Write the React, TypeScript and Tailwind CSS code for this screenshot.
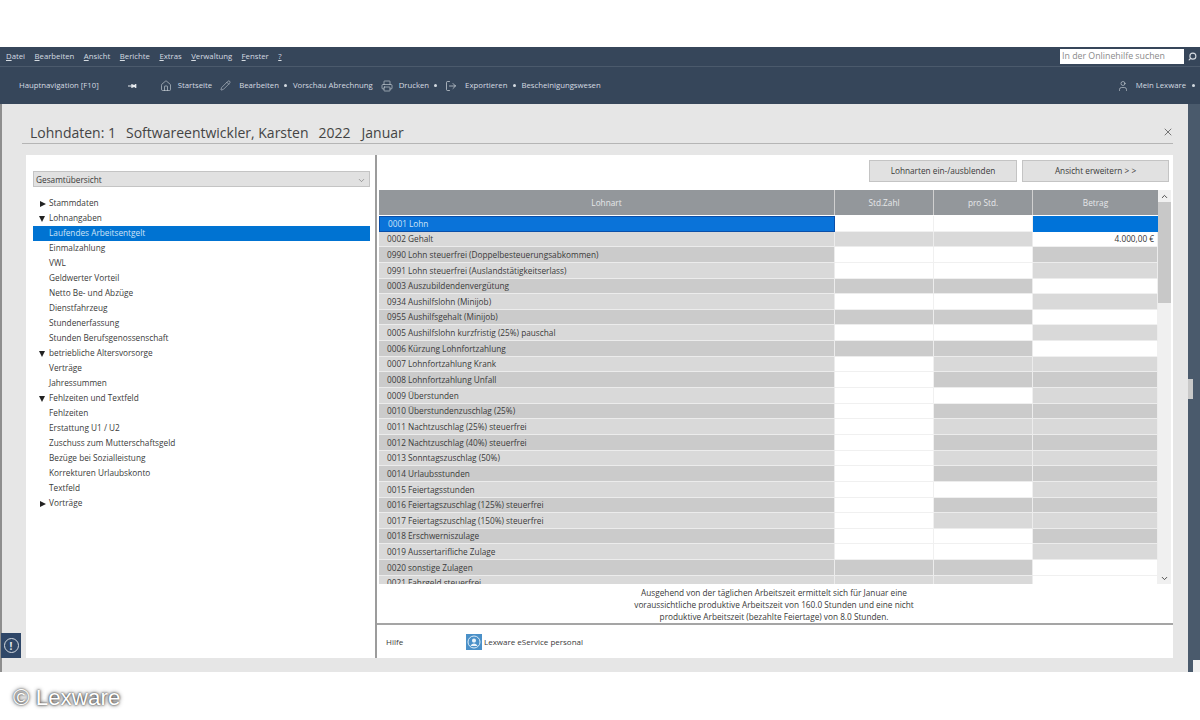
import { ChevronDown, ChevronUp, House, LogOut, Pencil, Printer, Search, User, X } from "lucide-react";

const menu = [
  ["D", "atei"],
  ["B", "earbeiten"],
  ["A", "nsicht"],
  ["B", "erichte"],
  ["E", "xtras"],
  ["V", "erwaltung"],
  ["F", "enster"],
  ["?", ""],
];

const tree = [
  { label: "Stammdaten", arrow: "right" },
  { label: "Lohnangaben", arrow: "down" },
  { label: "Laufendes Arbeitsentgelt", selected: true },
  { label: "Einmalzahlung" },
  { label: "VWL" },
  { label: "Geldwerter Vorteil" },
  { label: "Netto Be- und Abzüge" },
  { label: "Dienstfahrzeug" },
  { label: "Stundenerfassung" },
  { label: "Stunden Berufsgenossenschaft" },
  { label: "betriebliche Altersvorsorge", arrow: "down" },
  { label: "Verträge" },
  { label: "Jahressummen" },
  { label: "Fehlzeiten und Textfeld", arrow: "down" },
  { label: "Fehlzeiten" },
  { label: "Erstattung U1 / U2" },
  { label: "Zuschuss zum Mutterschaftsgeld" },
  { label: "Bezüge bei Sozialleistung" },
  { label: "Korrekturen Urlaubskonto" },
  { label: "Textfeld" },
  { label: "Vorträge", arrow: "right" },
];

// last three letters: Std.Zahl / pro Std. / Betrag, g = gesperrt, w = frei, b = markiert
const rows = [
  ["0001 Lohn", "wwb"],
  ["0002 Gehalt", "ggw"],
  ["0990 Lohn steuerfrei (Doppelbesteuerungsabkommen)", "wwg"],
  ["0991 Lohn steuerfrei (Auslandstätigkeitserlass)", "wwg"],
  ["0003 Auszubildendenvergütung", "ggw"],
  ["0934 Aushilfslohn (Minijob)", "wwg"],
  ["0955 Aushilfsgehalt (Minijob)", "ggw"],
  ["0005 Aushilfslohn kurzfristig (25%) pauschal", "wwg"],
  ["0006 Kürzung Lohnfortzahlung", "ggw"],
  ["0007 Lohnfortzahlung Krank", "wgg"],
  ["0008 Lohnfortzahlung Unfall", "wgg"],
  ["0009 Überstunden", "wwg"],
  ["0010 Überstundenzuschlag (25%)", "wgg"],
  ["0011 Nachtzuschlag (25%) steuerfrei", "wgg"],
  ["0012 Nachtzuschlag (40%) steuerfrei", "wgg"],
  ["0013 Sonntagszuschlag (50%)", "wgg"],
  ["0014 Urlaubsstunden", "wgg"],
  ["0015 Feiertagsstunden", "wwg"],
  ["0016 Feiertagszuschlag (125%) steuerfrei", "wgg"],
  ["0017 Feiertagszuschlag (150%) steuerfrei", "wgg"],
  ["0018 Erschwerniszulage", "wwg"],
  ["0019 Aussertarifliche Zulage", "wwg"],
  ["0020 sonstige Zulagen", "ggw"],
  ["0021 Fahrgeld steuerfrei", "ggw"],
];

function Dot() {
  return <span className="w-[3px] h-[3px] rounded-full bg-[#d5dbe1]" />;
}

function Cell({ kind, dark, text }: { kind: string; dark: boolean; text?: string }) {
  const color =
    kind === "b"
      ? "bg-[#0073d9] border-[#0073d9]"
      : kind === "w"
        ? "bg-white border-[#f0f0f0]"
        : dark
          ? "bg-[#cbcbcb] border-[#ececec]"
          : "bg-[#d9d9d9] border-[#ececec]";
  return (
    <div className={`border-b border-r flex items-center justify-end pr-[3px] pt-px text-[#333] ${color}`}>
      {text}
    </div>
  );
}

export default function App() {
  return (
    <div className="relative w-[1200px] h-[720px] bg-white flex flex-col text-[8.25px] text-[#3a3a3a] font-['Open_Sans',sans-serif] overflow-hidden">
      <div className="h-[47px] shrink-0" />

      <div className="h-[20px] shrink-0 bg-[#36465a] border-b border-[#4b5a6c] flex items-center pl-[6px] pr-[3px] gap-[9.5px] text-[7.75px] text-[#d5dbe1]">
        {menu.map(([first, rest]) => (
          <span key={first + rest}>
            <span className="underline">{first}</span>
            {rest}
          </span>
        ))}
        <div className="ml-auto w-[124px] h-[15px] bg-white text-[#8a8a8a] flex items-center pl-[2px] text-[8.8px]">
          In der Onlinehilfe suchen
        </div>
        <Search className="w-[9px] h-[9px] text-[#d5dbe1] -scale-x-100 -ml-[5.5px]" strokeWidth={3} />
      </div>

      <div className="h-[37px] shrink-0 bg-[#36465a] flex items-center pl-[19px] pr-[5px] text-[7.75px] text-[#d5dbe1]">
        <span>Hauptnavigation [F10]</span>
        <svg viewBox="0 0 12 8" className="w-[10px] h-[8px] ml-[29px] mr-[22px]" fill="#e6eaee">
          <path d="M0 3.5h4V4.5H0z M4 1.5h1.5v1h3v-1H10v5H8.5v-1h-3v1H4z" />
        </svg>
        <House className="w-[12px] h-[12px] mr-[6px]" strokeWidth={1.2} />
        <span className="mr-[8px]">Startseite</span>
        <Pencil className="w-[11px] h-[11px] mr-[8px]" strokeWidth={1.2} />
        <span className="mr-[5px]">Bearbeiten</span>
        <Dot />
        <span className="ml-[6px] mr-[8px]">Vorschau Abrechnung</span>
        <Printer className="w-[12px] h-[12px] mr-[6px]" strokeWidth={1.2} />
        <span className="mr-[5px]">Drucken</span>
        <Dot />
        <LogOut className="w-[12px] h-[12px] ml-[8px] mr-[8px]" strokeWidth={1.4} />
        <span className="mr-[6px]">Exportieren</span>
        <Dot />
        <span className="ml-[5px]">Bescheinigungswesen</span>
        <User className="w-[12px] h-[12px] ml-auto mr-[7px]" strokeWidth={1.2} />
        <span className="mr-[6px]">Mein Lexware</span>
        <Dot />
      </div>

      <div className="h-[568px] shrink-0 flex">
        <div className="w-[2px] bg-[#8e8e8e]" />
        <div className="w-[1186px] bg-[#e6e6e6] flex flex-col pl-[24px] pr-[15px]">
          <div className="h-[40px] shrink-0 -ml-[4px] border-b border-[#b5b5b5] flex items-center pl-[8px] pt-[17px] text-[14px] text-[#444]">
            <span>Lohndaten: 1</span>
            <span className="ml-[10px]">Softwareentwickler, Karsten</span>
            <span className="ml-[10px]">2022</span>
            <span className="ml-[11px]">Januar</span>
            <X className="w-[12px] h-[12px] ml-auto -mr-px text-[#444]" strokeWidth={1.4} />
          </div>

          <div className="mt-[11px] h-[503px] bg-white flex">
            <div className="w-[349px] shrink-0 pt-[16px] pl-[7px] pr-[5px] flex flex-col">
              <div className="h-[16px] bg-[#e1e1e1] border border-[#c4c4c4] flex items-center justify-between pl-[2px] pr-[3px] pt-[2px]">
                <span>Gesamtübersicht</span>
                <ChevronDown className="w-[9px] h-[9px] text-[#666]" strokeWidth={1.5} />
              </div>
              <div className="mt-[9px] flex flex-col">
                {tree.map((item) => (
                  <div
                    key={item.label}
                    className={`h-[15px] flex items-center pl-[16px] relative ${item.selected ? "bg-[#0073d2] text-[#cfe4f7]" : ""}`}
                  >
                    {item.arrow === "right" && (
                      <span className="absolute left-[7px] w-0 h-0 border-y-[3.5px] border-y-transparent border-l-[6px] border-l-[#222]" />
                    )}
                    {item.arrow === "down" && (
                      <span className="absolute left-[6px] w-0 h-0 border-x-[3.5px] border-x-transparent border-t-[6px] border-t-[#222]" />
                    )}
                    {item.label}
                  </div>
                ))}
              </div>
            </div>

            <div className="flex-1 border-l-2 border-[#9c9c9c] flex flex-col">
              <div className="h-[35px] shrink-0 flex items-start justify-end gap-[5px] pt-[5px] pr-[4px]">
                <div className="w-[148px] h-[22px] bg-[#e1e1e1] border border-[#c4c4c4] flex items-center justify-center">
                  Lohnarten ein-/ausblenden
                </div>
                <div className="w-[147px] h-[22px] bg-[#e1e1e1] border border-[#c4c4c4] flex items-center justify-center">
                  Ansicht erweitern &gt; &gt;
                </div>
              </div>

              <div className="h-[394px] shrink-0 flex pl-[2px]">
                <div className="w-[779px] shrink-0">
                  <div className="h-[26px] grid grid-cols-[456px_99px_99px_125px] bg-[#93979b] text-[#e6e8ea] border-b border-white">
                    <div className="flex items-center justify-center pt-px border-r border-[#d0d0d0]">Lohnart</div>
                    <div className="flex items-center justify-center pt-px border-r border-[#d0d0d0]">Std.Zahl</div>
                    <div className="flex items-center justify-center pt-px border-r border-[#d0d0d0]">pro Std.</div>
                    <div className="flex items-center justify-center pt-px">Betrag</div>
                  </div>
                  <div className="h-[368px] overflow-hidden">
                    {rows.map(([name, kinds], i) => {
                      const dark = i % 2 === 0;
                      return (
                        <div key={name} className="h-[15.65px] grid grid-cols-[456px_99px_99px_125px]">
                          <div
                            className={`flex items-center pl-[8px] pt-px ${
                              i === 0
                                ? "bg-[#0a73d9] border border-[#0b4fa8] text-[#cfe4f7]"
                                : dark
                                  ? "bg-[#cbcbcb] border-b border-r border-[#ececec]"
                                  : "bg-[#d9d9d9] border-b border-r border-[#ececec]"
                            }`}
                          >
                            {name}
                          </div>
                          <Cell kind={kinds[0]} dark={dark} />
                          <Cell kind={kinds[1]} dark={dark} />
                          <Cell kind={kinds[2]} dark={dark} text={i === 1 ? "4.000,00 €" : undefined} />
                        </div>
                      );
                    })}
                  </div>
                </div>
                <div className="w-[13px] shrink-0 bg-[#f0f0f0] flex flex-col items-center">
                  <div className="h-[12px] flex items-center">
                    <ChevronUp className="w-[9px] h-[9px] text-[#444]" strokeWidth={2.5} />
                  </div>
                  <div className="w-full h-[101px] bg-[#c8c8c8]" />
                  <div className="mt-auto h-[12px] flex items-center">
                    <ChevronDown className="w-[9px] h-[9px] text-[#444]" strokeWidth={2.5} />
                  </div>
                </div>
              </div>

              <div className="h-[41px] shrink-0 border-b-2 border-[#a5a5a5] flex flex-col items-center justify-center leading-[12px] pr-[2px] pt-[3px] text-center">
                <span>Ausgehend von der täglichen Arbeitszeit ermittelt sich für Januar eine</span>
                <span>voraussichtliche produktive Arbeitszeit von 160.0 Stunden und eine nicht</span>
                <span>produktive Arbeitszeit (bezahlte Feiertage) von 8.0 Stunden.</span>
              </div>

              <div className="flex-1 flex items-center pl-[9px] text-[8px]">
                <span className="w-[80px]">Hilfe</span>
                <svg viewBox="0 0 16 16" className="w-[16px] h-[16px] mr-[2px] mt-[1px]">
                  <rect width="16" height="16" fill="#4a90c8" />
                  <circle cx="8" cy="8" r="6" fill="none" stroke="#dcebf6" strokeWidth="1" />
                  <path d="M8 4.5a2 2 0 0 1 2 2c0 1-.6 1.7-1 2h-2c-.4-.3-1-1-1-2a2 2 0 0 1 2-2zM4.5 12c.5-1.5 2-2.500 3.500-2.500s3 1 3.500 2.500z" fill="#eaf3fa" />
                </svg>
                <span>Lexware eService personal</span>
              </div>
            </div>
          </div>
        </div>
        <div className="w-[12px] bg-[#4a5a6c]" />
      </div>

      <div className="flex-1 pl-[13px] pt-[13px] text-[22.4px] leading-[26px] text-white font-['Liberation_Sans',sans-serif] [text-shadow:0_0_4px_#333,0_0_2px_#333]">
        © Lexware
      </div>

      <div className="absolute left-[1px] top-[633px] w-[20px] h-[25px] bg-[#2f4768] flex items-center justify-center">
        <div className="w-[15px] h-[15px] rounded-full border border-[#d5dbe1] flex items-center justify-center text-[10px] leading-none font-bold text-[#e6eaee]">
          !
        </div>
      </div>
      <div className="absolute left-[1188px] top-[379px] w-[5px] h-[20px] bg-[#c9c9c9]" />
      <div className="absolute left-[1193px] top-[660px] w-[7px] h-[12px] bg-[#f0f0f0]" />
    </div>
  );
}
